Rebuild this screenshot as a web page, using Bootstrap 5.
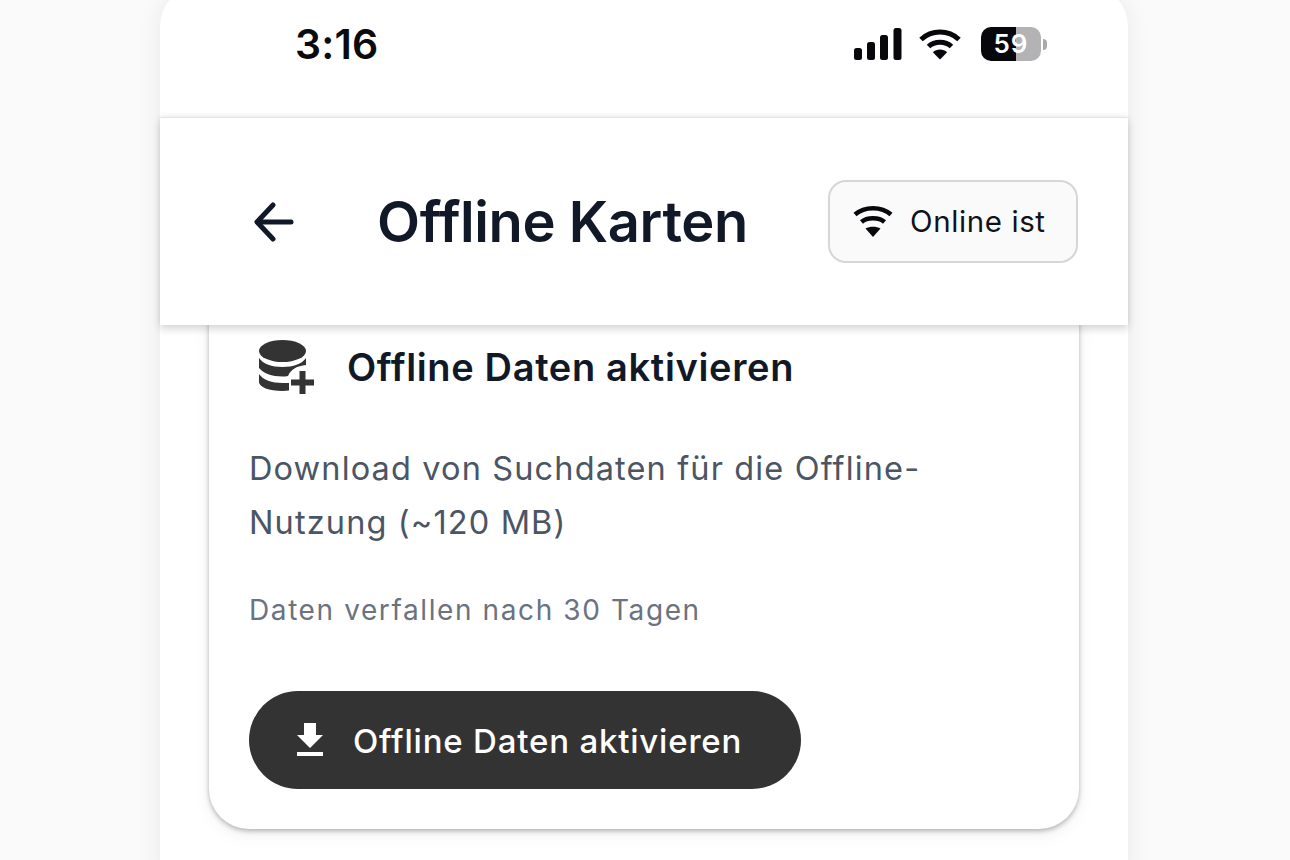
<!DOCTYPE html>
<html lang="de">
<head>
  <meta charset="UTF-8" />
  <meta name="viewport" content="width=device-width, initial-scale=1.0" />
  <title>Offline Karten</title>
  <link href="https://cdn.jsdelivr.net/npm/bootstrap@5.3.0/dist/css/bootstrap.min.css" rel="stylesheet">
  <style>
    html, body {
      height: 860px;
      overflow: hidden;
    }
    body {
      background: #fafafa;
      font-family: "Inter", "Liberation Sans", sans-serif;
    }
    .phone-frame {
      width: 968px;
      height: 900px;
      margin-left: 160px;
      margin-top: -14px;
      padding-top: 14px;
      background: #fff;
      border-radius: 40px 40px 0 0;
      box-shadow: 0 0 24px rgba(0, 0, 0, .07);
    }
    .status-bar {
      height: 117px;
      padding: 0 81px 29px 135px;
    }
    .status-time {
      font-size: 41px;
      font-weight: 600;
      line-height: 48px;
      letter-spacing: .2px;
      color: #0b0b0f;
    }
    .battery-box {
      width: 60px;
      height: 34px;
      margin-left: 19px;
      border-radius: 10px;
      overflow: hidden;
      background: linear-gradient(90deg, #08080c 0 58%, #b3b3b6 58% 100%);
      color: #fff;
      font-size: 26px;
      font-weight: 600;
      line-height: 34px;
      text-align: center;
      letter-spacing: 1px;
    }
    .battery-tip {
      width: 4px;
      height: 11px;
      margin-left: 2px;
      background: #a9a9ac;
      border-radius: 0 4px 4px 0;
    }
    .page-header {
      position: relative;
      z-index: 2;
      height: 208px;
      padding: 0 50px 0 92px;
      background: #fff;
      border-top: 1px solid #e4e4e4;
      box-shadow: 0 -2px 5px rgba(0, 0, 0, .05), 0 4px 8px rgba(0, 0, 0, .16);
    }
    .page-title {
      font-size: 56px;
      font-weight: 600;
      letter-spacing: -.4px;
      line-height: 64px;
      color: #111827;
      margin: 0 0 0 81px;
    }
    .online-chip {
      width: 250px;
      height: 83px;
      padding-left: 23px;
      gap: 17px;
      margin-top: -1px;
      background: #fafafa;
      border: 2px solid #d6d6d6;
      border-radius: 18px;
      font-size: 29.5px;
      font-weight: 400;
      letter-spacing: .6px;
      color: #0f1218;
    }
    .offline-card {
      width: 870px;
      height: 545px;
      margin: -41px 0 0 49px;
      padding: 56px 40px 0;
      background: #fff;
      border: 0;
      border-radius: 40px;
      box-shadow: 0 2px 5px rgba(0, 0, 0, .28), 0 6px 18px rgba(0, 0, 0, .06);
    }
    .db-icon {
      margin-left: 10px;
    }
    .card-heading {
      font-size: 38px;
      font-weight: 600;
      line-height: 44px;
      letter-spacing: .65px;
      color: #111827;
      margin: 0 0 0 32px;
    }
    .card-desc {
      font-size: 32.5px;
      font-weight: 400;
      line-height: 54px;
      letter-spacing: 1.13px;
      color: #4b5563;
      margin: 48px 0 0;
    }
    .card-note {
      font-size: 28px;
      line-height: 34px;
      letter-spacing: 1.6px;
      color: #6b7280;
      margin: 43px 0 0;
    }
    .download-btn {
      width: 552px;
      height: 98px;
      margin-top: 64px;
      padding: 3px 0 0 48px;
      gap: 30px;
      background: #333;
      border: 0;
      border-radius: 50px;
      color: #fff;
      font-size: 33px;
      font-weight: 500;
      letter-spacing: .8px;
    }
    .download-btn svg {
      margin-top: -5px;
    }
    .download-btn:hover {
      background: #333;
      color: #fff;
    }
  </style>
</head>
<body>

<div class="phone-frame">
  <div class="status-bar d-flex align-items-center justify-content-between">
    <div class="status-time">3:16</div>
    <div class="d-flex align-items-center">
      <svg width="48" height="32" viewBox="0 0 48 32" fill="#08080c" aria-hidden="true">
        <rect x="0" y="20" width="8" height="12" rx="2.5"/>
        <rect x="13" y="14" width="8" height="18" rx="2.5"/>
        <rect x="26" y="7" width="8" height="25" rx="2.5"/>
        <rect x="39.500" y="0" width="8" height="32" rx="2.500"/>
      </svg>
      <svg class="ms-3" width="44" height="32" viewBox="0 0 44 32" fill="none" stroke="#08080c" stroke-width="5" aria-hidden="true">
        <path d="M3 11.500C13.500 1.500 30.500 1.500 41 11.500"/>
        <path d="M10.500 18.500C16.500 12.800 27.500 12.800 33.500 18.500"/>
        <path d="M22 31.500L14.800 24.200C18.500 20.700 25.500 20.700 29.200 24.200Z" fill="#08080c" stroke="none"/>
      </svg>
      <div class="battery-box">59</div>
      <div class="battery-tip"></div>
    </div>
  </div>

  <div class="page-header d-flex align-items-center">
    <svg width="44" height="44" viewBox="0 0 44 44" fill="none" stroke="#111827" stroke-width="5" stroke-linecap="round" stroke-linejoin="round" aria-hidden="true">
      <path d="M39 22H6"/>
      <path d="M21 5L5 22L21 39"/>
    </svg>
    <h1 class="page-title">Offline Karten</h1>
    <div class="online-chip d-flex align-items-center ms-auto">
      <svg width="40" height="34" viewBox="0 0 40 34" fill="none" stroke="#08080c" stroke-width="4.500" aria-hidden="true">
        <path d="M2 10.500C11.500 2 28.500 2 38 10.500"/>
        <path d="M8.500 18C14 13 26 13 31.500 18"/>
        <path d="M20 33L12.500 24.500C16.500 22 23.500 22 27.500 24.500Z" fill="#08080c" stroke="none"/>
      </svg>
      <span>Online ist</span>
    </div>
  </div>

  <div class="card offline-card">
    <div class="d-flex align-items-center">
      <svg class="db-icon" width="56" height="54" viewBox="0 0 56 54" fill="#333" aria-hidden="true">
        <ellipse cx="23.500" cy="11" rx="23.500" ry="11"/>
        <path d="M0 18C4 24 13 27 23.500 27C34 27 43 24 47 18V25C38 26 32 29 29 36C27 36.500 25 36.500 23.500 36.500C13 36.500 4 33 0 28Z"/>
        <path d="M0 34C4 40 13 43 23.500 43H30V50.500C28 50.800 26 51 23.500 51C10 51 0 47 0 42Z"/>
        <rect x="40.500" y="31" width="6" height="23"/>
        <rect x="32" y="39.500" width="23" height="6"/>
      </svg>
      <h2 class="card-heading">Offline Daten aktivieren</h2>
    </div>
    <p class="card-desc">Download von Suchdaten für die Offline-<br>Nutzung (~120 MB)</p>
    <p class="card-note">Daten verfallen nach 30 Tagen</p>
    <button type="button" class="btn download-btn d-flex align-items-center">
      <svg width="26" height="33" viewBox="0 0 26 33" fill="#fff" aria-hidden="true">
        <path d="M7 0H19V12H26L13 25L0 12H7Z"/>
        <rect x="0" y="29" width="26" height="4"/>
      </svg>
      <span>Offline Daten aktivieren</span>
    </button>
  </div>
</div>

<script src="https://cdn.jsdelivr.net/npm/bootstrap@5.3.0/dist/js/bootstrap.bundle.min.js"></script>
</body>
</html>
